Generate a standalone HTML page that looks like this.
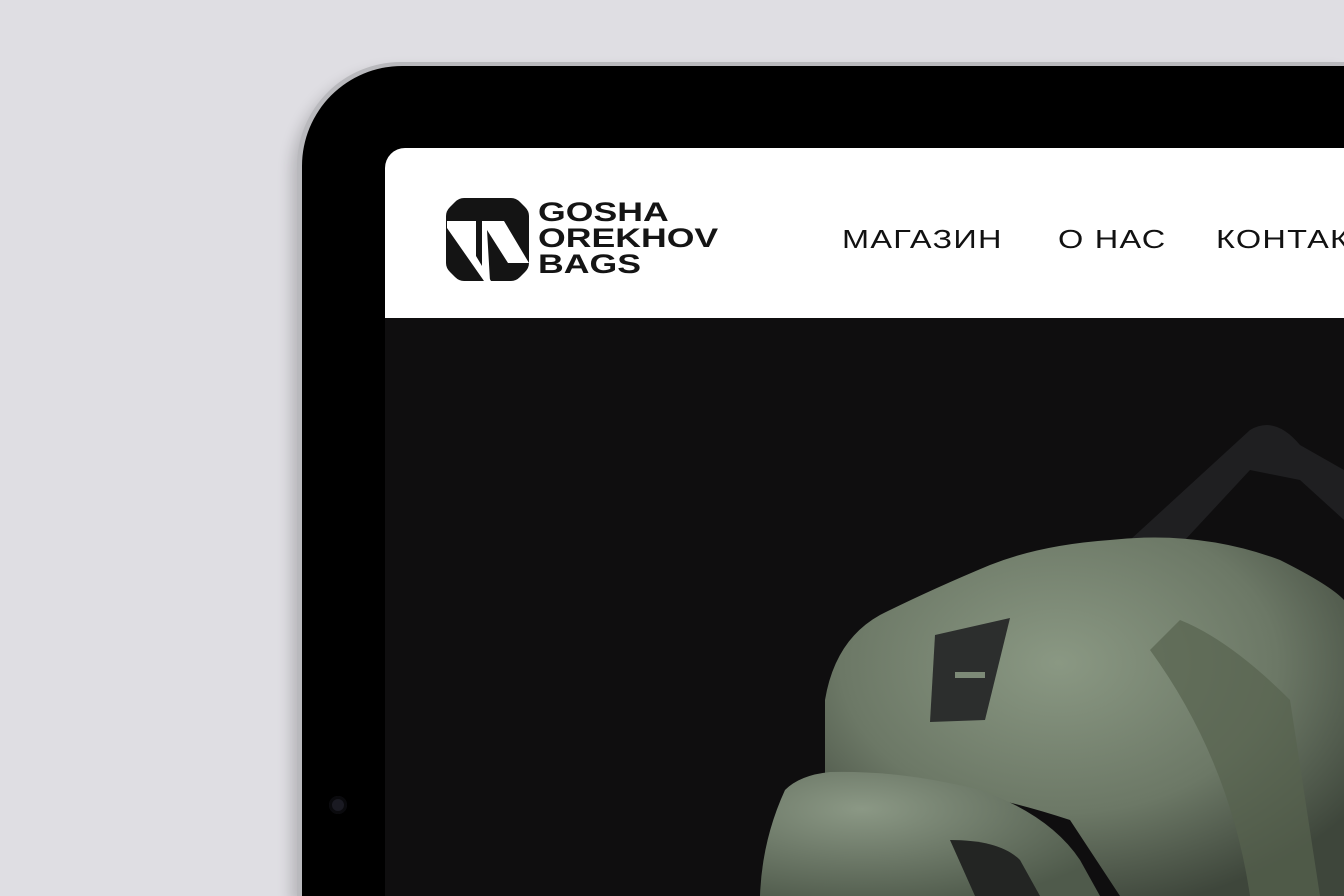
<!DOCTYPE html>
<html><head><meta charset="utf-8"><style>
html,body{margin:0;padding:0;width:1344px;height:896px;overflow:hidden;background:#dfdee3;}
.wrap{position:relative;width:1344px;height:896px;overflow:hidden;background:#dfdee3;}
.dev{position:absolute;left:297px;top:62px;width:1047px;height:834px;border-radius:104px 0 0 0;background:#b9b9bd;box-shadow:-6px 8px 14px rgba(0,0,0,.18);}
.bez{position:absolute;left:302px;top:66px;width:1042px;height:830px;border-radius:100px 0 0 0;background:#000;}
.scr{position:absolute;left:385px;top:148px;width:959px;height:748px;border-radius:20px 0 0 0;background:#0f0e0f;overflow:hidden;}
.hdr{position:absolute;left:0;top:0;width:100%;height:170px;background:#fff;}
.brand{position:absolute;left:153px;top:51px;font:bold 27px/26px "Liberation Sans",sans-serif;color:#141414;transform:scaleX(1.32);transform-origin:left;}
.nav{position:absolute;top:76px;font:26px/30px "Liberation Sans","DejaVu Sans",sans-serif;color:#111;letter-spacing:1px;transform:scaleX(1.25);transform-origin:left;}
.cam{position:absolute;left:329px;top:796px;width:18px;height:18px;border-radius:50%;background:#1a1a22;box-shadow:inset 0 0 0 3px #0a0a0d;}
</style></head><body><div class="wrap">
<div class="dev"></div>
<div class="bez"></div>
<div class="cam"></div>
<div class="scr">
 <div class="hdr">
  <svg style="position:absolute;left:61px;top:50px" width="83" height="83" viewBox="0 0 83 83">
   <path d="M18 0H65Q70 0 74 4L79 9Q83 13 83 18V65Q83 70 79 74L74 79Q70 83 65 83H18Q13 83 9 79L4 74Q0 70 0 65V18Q0 13 4 9L9 4Q13 0 18 0Z" fill="#141414"/>
   <path d="M1 23L30 23L30 58L45 83L38 83L1 30Z" fill="#fff"/>
   <path d="M36 23L58 23L83 65L62 65L41 32L44 83L38 83L36 70Z" fill="#fff"/>
  </svg>
  <div class="brand">GOSHA<br>OREKHOV<br>BAGS</div>
  <div class="nav" style="left:457px">МАГАЗИН</div>
  <div class="nav" style="left:673px">О НАС</div>
  <div class="nav" style="left:831px">КОНТАКТЫ</div>
 </div>
</div>
<svg style="position:absolute;left:0;top:0" width="1344" height="896" viewBox="0 0 1344 896">
 <defs>
  <radialGradient id="g1" cx="0.45" cy="0.35" r="0.7"><stop offset="0" stop-color="#8a9883"/><stop offset="0.6" stop-color="#6c7866"/><stop offset="1" stop-color="#3e463b"/></radialGradient>
  <radialGradient id="g2" cx="0.3" cy="0.3" r="0.8"><stop offset="0" stop-color="#8b9885"/><stop offset="1" stop-color="#4f5a4b"/></radialGradient>
 </defs>
 <path d="M1130 540L1250 430Q1275 415 1300 445L1344 470L1344 520L1300 480L1250 470L1185 540Z" fill="#1f1f21"/>
 <path d="M825 700Q835 640 880 615Q930 590 990 565Q1040 545 1110 540Q1200 530 1280 560Q1330 585 1344 600L1344 896L1120 896L1070 820Q950 780 825 780Z" fill="url(#g1)"/>
 <path d="M1180 620Q1230 640 1290 700L1320 896L1250 896Q1230 760 1150 650Z" fill="#57624f" opacity=".7"/>
 <path d="M935 635L1010 618L985 720L930 722Z" fill="#2c2e2d"/>
 <rect x="955" y="672" width="30" height="6" fill="#7d8a77"/>
 <path d="M760 896Q762 840 785 790Q800 775 830 772Q900 770 980 790Q1050 815 1080 860L1100 896Z" fill="url(#g2)"/>
 <path d="M950 840Q1000 840 1020 860L1040 896L975 896Z" fill="#232523"/>
</svg>
</div></body></html>
